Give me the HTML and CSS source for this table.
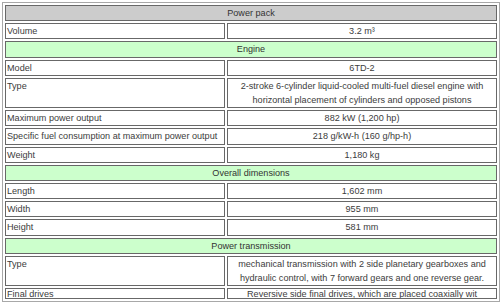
FILE: index.html
```html
<!DOCTYPE html>
<html>
<head>
<meta charset="utf-8">
<link rel="stylesheet" href="styles.css">
</head>
<body>
<table class="specs">
  <colgroup><col class="c1"><col class="c2"></colgroup>
  <tr><th colspan="2" class="grey">Power pack</th></tr>
  <tr><td>Volume</td><td class="v">3.2 m³</td></tr>
  <tr><th colspan="2" class="green">Engine</th></tr>
  <tr><td>Model</td><td class="v">6TD-2</td></tr>
  <tr><td>Type</td><td class="v">2-stroke 6-cylinder liquid-cooled multi-fuel diesel engine with<br>horizontal placement of cylinders and opposed pistons</td></tr>
  <tr><td>Maximum power output</td><td class="v">882 kW (1,200 hp)</td></tr>
  <tr><td>Specific fuel consumption at maximum power output</td><td class="v">218 g/kW-h (160 g/hp-h)</td></tr>
  <tr><td>Weight</td><td class="v">1,180 kg</td></tr>
  <tr><th colspan="2" class="green">Overall dimensions</th></tr>
  <tr><td>Length</td><td class="v">1,602 mm</td></tr>
  <tr><td>Width</td><td class="v">955 mm</td></tr>
  <tr><td>Height</td><td class="v">581 mm</td></tr>
  <tr><th colspan="2" class="green">Power transmission</th></tr>
  <tr><td>Type</td><td class="v">mechanical transmission with 2 side planetary gearboxes and<br>hydraulic control, with 7 forward gears and one reverse gear.</td></tr>
  <tr class="last"><td><div class="clip">Final drives</div></td><td class="v"><div class="clip">Reversive side final drives, which are placed coaxially wit</div></td></tr>
</table>
</body>
</html>
```
FILE: styles.css
```css
html, body {
  margin: 0;
  padding: 0;
  background: #fff;
  overflow: hidden;
}
body {
  padding: 2px 0 0 2px;
}
.specs {
  width: 498px;
  border-collapse: separate;
  border-spacing: 2px;
  border: 1px solid #a8a8a8;
  font-family: "Liberation Sans", Arial, sans-serif;
  font-size: 9.1px;
  line-height: 14.2px;
  color: #3c3c3c;
  table-layout: fixed;
}
.c1 { width: 220px; }
.specs th, .specs td {
  border: 1px solid #686868;
  padding: 0 1px;
  vertical-align: top;
}
.specs th {
  font-weight: normal;
  text-align: center;
  color: #333;
}
.specs td.v {
  text-align: center;
}
.grey { background: #cccccc; }
.green { background: #ccffcc; }
.clip {
  height: 9px;
  line-height: 10px;
  overflow: hidden;
}
```
